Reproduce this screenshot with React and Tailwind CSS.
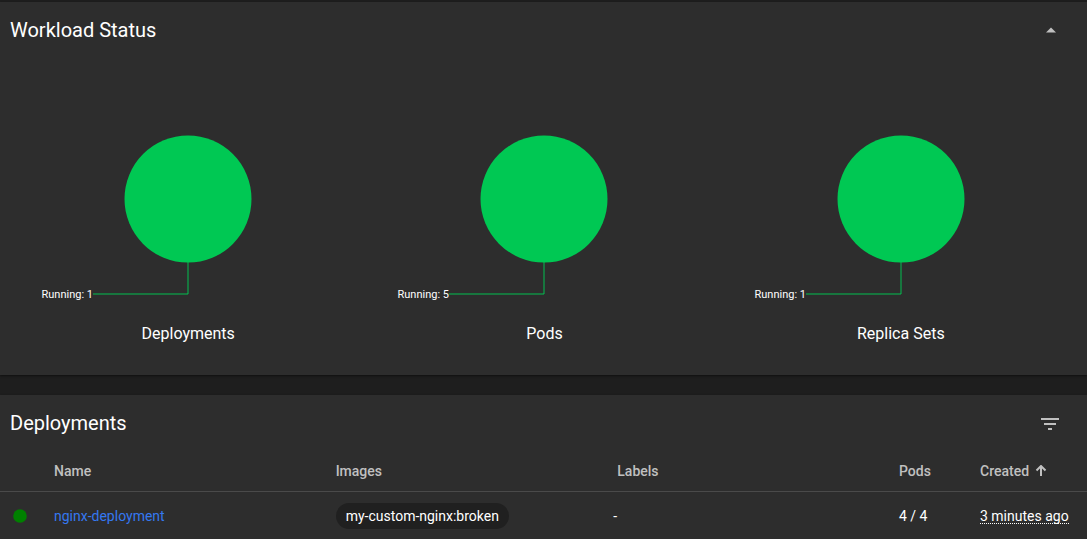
const charts = [
  { name: "Deployments", running: 1 },
  { name: "Pods", running: 5 },
  { name: "Replica Sets", running: 1 },
];

const deployments = [
  {
    name: "nginx-deployment",
    image: "my-custom-nginx:broken",
    labels: "-",
    pods: "4 / 4",
    created: "3 minutes ago",
  },
];

function StatusChart({ name, running }) {
  return (
    <figure className="flex flex-col items-center">
      <svg width="320" height="180" viewBox="0 0 320 180" role="img" aria-label={`${name} running: ${running}`}>
        <circle cx="160" cy="74" r="63.5" fill="#00c853" />
        <path d="M160 137V169H65" fill="none" stroke="#00c853" strokeOpacity="0.95" />
        <text x="65" y="173" textAnchor="end" fill="#ffffff" className="text-[11px]">
          Running: {running}
        </text>
      </svg>
      <figcaption className="mt-[17px] text-base leading-6">{name}</figcaption>
    </figure>
  );
}

function Card({ title, action, children }) {
  return (
    <section className="bg-[#2d2d2d] shadow-[0_1px_2px_rgba(0,0,0,0.5)]">
      <header className="flex h-14 items-center justify-between pr-4 pl-[10px]">
        <h2 className="text-xl leading-6">{title}</h2>
        {action}
      </header>
      {children}
    </section>
  );
}

export default function App() {
  return (
    <main className="flex min-h-screen flex-col gap-5 bg-[#1e1e1e] pt-[2px] font-['Roboto',sans-serif] text-white">
      <Card
        title="Workload Status"
        action={
          <button type="button" aria-label="Collapse" className="flex size-10 items-center justify-center text-[#c0c0c0]">
            <svg width="24" height="24" viewBox="0 0 24 24" fill="currentColor">
              <path d="M7 14.5l5-5 5 5z" />
            </svg>
          </button>
        }
      >
        <div className="grid grid-cols-3 pt-[67px] pr-2 pb-[29px] pl-[10px]">
          {charts.map((chart) => (
            <StatusChart key={chart.name} {...chart} />
          ))}
        </div>
      </Card>

      <Card
        title="Deployments"
        action={
          <button type="button" aria-label="Filter" className="flex size-10 items-center justify-center text-[#c0c0c0]">
            <svg width="24" height="24" viewBox="0 0 24 24" fill="currentColor">
              <path d="M9 19h4v-2H9v2zM2 7v2h18V7H2zm3 7h12v-2H5v2z" />
            </svg>
          </button>
        }
      >
        <table className="w-full table-fixed border-separate border-spacing-0 text-left text-sm">
          <colgroup>
            <col className="w-[54px]" />
            <col />
            <col />
            <col />
            <col className="w-[81px]" />
            <col className="w-[107px]" />
          </colgroup>
          <thead>
            <tr className="h-[41px] text-[#c0c0c0] *:border-b *:border-[#4a4a4a] *:p-0">
              <td />
              <th className="font-medium">Name</th>
              <th className="font-medium">Images</th>
              <th className="font-medium">Labels</th>
              <th className="font-medium">Pods</th>
              <th className="font-medium">
                <button type="button" className="flex items-center gap-[6px] font-medium">
                  Created
                  <svg width="12" height="12" viewBox="0 0 12 12" fill="none" stroke="currentColor" strokeWidth="2">
                    <path d="M6 11V1.500M1.500 5.500L6 1L10.500 5.500" />
                  </svg>
                </button>
              </th>
            </tr>
          </thead>
          <tbody>
            {deployments.map((item) => (
              <tr key={item.name} className="h-12">
                <td className="p-0">
                  <svg width="14" height="14" viewBox="0 0 14 14" role="img" aria-label="Running" className="ml-[13px]">
                    <circle cx="7" cy="7" r="6.800" fill="#008000" />
                  </svg>
                </td>
                <td className="p-0">
                  <a href="#nginx-deployment" className="text-[#3478f0]">
                    {item.name}
                  </a>
                </td>
                <td className="p-0">
                  <span className="inline-flex h-[26px] items-center rounded-full bg-[#202020] px-[10px]">{item.image}</span>
                </td>
                <td className="p-0">
                  <span className="-ml-1">{item.labels}</span>
                </td>
                <td className="p-0">{item.pods}</td>
                <td className="p-0">
                  <span className="inline-block border-b border-dotted border-white leading-[14px]">{item.created}</span>
                </td>
              </tr>
            ))}
          </tbody>
        </table>
      </Card>
    </main>
  );
}
